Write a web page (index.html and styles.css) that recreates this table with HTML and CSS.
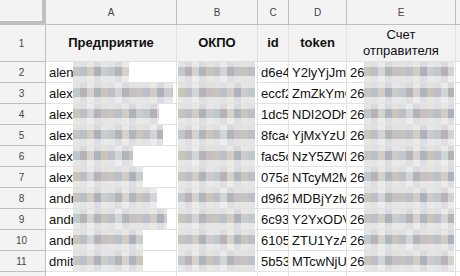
FILE: index.html
```html
<!DOCTYPE html>
<html>
<head>
<meta charset="utf-8">
<link rel="stylesheet" href="styles.css">
</head>
<body>
<div class="sheet">
  <div class="corner"></div>
  <div class="colh">A</div>
  <div class="colh">B</div>
  <div class="colh">C</div>
  <div class="colh">D</div>
  <div class="colh">E</div>
  <div class="colh last"></div>

  <div class="rowh">1</div>
  <div class="hcell bold">Предприятие</div>
  <div class="hcell bold">ОКПО</div>
  <div class="hcell bold">id</div>
  <div class="hcell bold">token</div>
  <div class="hcell">Счет<br>отправителя</div>
  <div class="hcell last"></div>

  <div class="rowh">2</div>
  <div class="cell">alen<span class="blur m1" style="width:56px"></span></div>
  <div class="cell"><span class="blur b m2"></span></div>
  <div class="cell">d6e4a1</div>
  <div class="cell">Y2lyYjJmZWQ</div>
  <div class="cell">26<span class="blur e m3"></span></div>
  <div class="cell last"></div>

  <div class="rowh">3</div>
  <div class="cell">alex<span class="blur m2" style="width:100px"></span></div>
  <div class="cell"><span class="blur b m3"></span></div>
  <div class="cell">eccf2b</div>
  <div class="cell">ZmZkYmQxN</div>
  <div class="cell">26<span class="blur e m1"></span></div>
  <div class="cell last"></div>

  <div class="rowh">4</div>
  <div class="cell">alex<span class="blur m3" style="width:86px"></span></div>
  <div class="cell"><span class="blur b m1"></span></div>
  <div class="cell">1dc5e3</div>
  <div class="cell">NDI2ODhkZ</div>
  <div class="cell">26<span class="blur e m2"></span></div>
  <div class="cell last"></div>

  <div class="rowh">5</div>
  <div class="cell">alex<span class="blur m1" style="width:90px"></span></div>
  <div class="cell"><span class="blur b m2"></span></div>
  <div class="cell">8fca4d</div>
  <div class="cell">YjMxYzUzN</div>
  <div class="cell">26<span class="blur e m3"></span></div>
  <div class="cell last"></div>

  <div class="rowh">6</div>
  <div class="cell">alex<span class="blur m2" style="width:60px"></span></div>
  <div class="cell"><span class="blur b m3"></span></div>
  <div class="cell">fac5c1</div>
  <div class="cell">NzY5ZWIxM</div>
  <div class="cell">26<span class="blur e m1"></span></div>
  <div class="cell last"></div>

  <div class="rowh">7</div>
  <div class="cell">alex<span class="blur m3" style="width:70px"></span></div>
  <div class="cell"><span class="blur b m1"></span></div>
  <div class="cell">075a3e</div>
  <div class="cell">NTcyM2MxZ</div>
  <div class="cell">26<span class="blur e m2"></span></div>
  <div class="cell last"></div>

  <div class="rowh">8</div>
  <div class="cell">andr<span class="blur m1" style="width:84px"></span></div>
  <div class="cell"><span class="blur b m2"></span></div>
  <div class="cell">d962f1</div>
  <div class="cell">MDBjYzlwN</div>
  <div class="cell">26<span class="blur e m3"></span></div>
  <div class="cell last"></div>

  <div class="rowh">9</div>
  <div class="cell">andr<span class="blur m2" style="width:94px"></span></div>
  <div class="cell"><span class="blur b m3"></span></div>
  <div class="cell">6c93e2</div>
  <div class="cell">Y2YxODVmZ</div>
  <div class="cell">26<span class="blur e m1"></span></div>
  <div class="cell last"></div>

  <div class="rowh">10</div>
  <div class="cell">andr<span class="blur m3" style="width:70px"></span></div>
  <div class="cell"><span class="blur b m1"></span></div>
  <div class="cell">6105b7</div>
  <div class="cell">ZTU1YzA4N</div>
  <div class="cell">26<span class="blur e m2"></span></div>
  <div class="cell last"></div>

  <div class="rowh">11</div>
  <div class="cell">dmit<span class="blur m1" style="width:70px"></span></div>
  <div class="cell"><span class="blur b m2"></span></div>
  <div class="cell">5b53a9</div>
  <div class="cell">MTcwNjUxZ</div>
  <div class="cell">26<span class="blur e m3"></span></div>
  <div class="cell last"></div>

  <div class="rowh"></div>
  <div class="cell"></div>
  <div class="cell"></div>
  <div class="cell"></div>
  <div class="cell"></div>
  <div class="cell"></div>
  <div class="cell last"></div>
</div>
</body>
</html>
```

FILE: styles.css
```css
html, body {
  margin: 0;
  padding: 0;
  background: #ffffff;
  overflow: hidden;
}

.sheet {
  display: grid;
  grid-template-columns: 46px 131px 81px 31px 58px 109px 20px;
  grid-template-rows: 25px 37px repeat(11, 21px);
  font-family: "Liberation Sans", Arial, sans-serif;
  font-size: 13px;
  color: #111;
  width: 480px;
}

.sheet > div {
  box-sizing: border-box;
  border-right: 1px solid #e2e2e2;
  border-bottom: 1px solid #e2e2e2;
  position: relative;
  white-space: nowrap;
  overflow: hidden;
}

.corner {
  background: #f3f3f3;
  border-right: 4px solid #c0c0c0 !important;
  border-bottom: 4px solid #c0c0c0 !important;
}

.colh {
  background: #f3f3f3;
  border-right-color: #c0c0c0 !important;
  border-bottom-color: #c0c0c0 !important;
  font-size: 10px;
  color: #444;
  display: flex;
  align-items: center;
  justify-content: center;
}

.rowh {
  background: #f3f3f3;
  border-right-color: #c0c0c0 !important;
  border-bottom-color: #c0c0c0 !important;
  font-size: 10px;
  color: #444;
  display: flex;
  align-items: center;
  justify-content: center;
  padding-right: 2px;
}

.hcell {
  background: #f3f3f3;
  display: flex;
  align-items: center;
  justify-content: center;
  text-align: center;
  line-height: 16px;
  color: #111;
}

.bold {
  font-weight: bold;
}

.cell {
  display: flex;
  align-items: center;
  padding-left: 3px;
}

.sheet > .last {
  border-right: none;
}

.blur {
  position: absolute;
  top: -1px;
  left: 27px;
  height: 22px;
  background-image:
    linear-gradient(to bottom, rgba(255,255,255,0.55) 0 6px, rgba(255,255,255,0.05) 6px 15px, rgba(255,255,255,0.6) 15px),
    linear-gradient(to right,
      #c4c0bb 0 7px, #b8bcc6 7px 14px, #cfcac2 14px 21px, #a9adb8 21px 28px,
      #c9c9c9 28px 35px, #bcc6c8 35px 42px, #b3adb6 42px 49px, #d3d0cb 49px 56px,
      #a8b2b8 56px 63px, #c7c2b5 63px 70px, #bbbbc4 70px 77px, #d0d3d5 77px 84px,
      #aeb0b3 84px 91px, #c3bcc0 91px 98px);
  background-size: 100% 100%, 98px 100%;
  background-repeat: no-repeat, repeat-x;
}

.m2 {
  background-position: 0 0, -35px 0;
}

.m3 {
  background-position: 0 0, -63px 0;
}

.blur.b {
  left: 1px;
  width: 77px;
}

.blur.e {
  left: 17px;
  width: 90px;
}
```
